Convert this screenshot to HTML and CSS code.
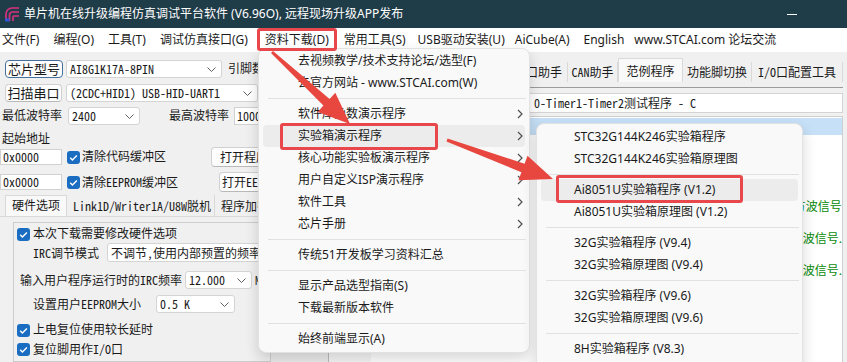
FILE: index.html
```html
<!DOCTYPE html>
<html lang="zh-CN">
<head>
  <meta charset="UTF-8">
  <meta name="viewport" content="width=device-width, initial-scale=1.0">
  <title>STC-ISP 单片机在线升级编程仿真调试平台软件</title>
  <link rel="stylesheet" href="styles.css">
</head>
<body>
  <div class="window">
    <header class="titlebar">
      <svg class="logo" viewBox="0 0 16 16">
        <path d="M2 15V8a6 6 0 0 1 6-6h7" />
        <path d="M5.5 15V9a3 3 0 0 1 3-3H15" />
        <path d="M9 15v-4a1 1 0 0 1 1-1h5" />
        <rect class="logo-foot" x="1" y="12.5" width="4.5" height="3" />
      </svg>
      <span class="title">单片机在线升级编程仿真调试平台软件 (V6.96O), 远程现场升级APP发布</span>
      <span class="win-min"></span>
    </header>

    <nav class="menubar">
      <span class="mi">文件(F)</span>
      <span class="mi">编程(O)</span>
      <span class="mi">工具(T)</span>
      <span class="mi">调试仿真接口(G)</span>
      <span class="mi open">资料下载(D)</span>
      <span class="mi">常用工具(S)</span>
      <span class="mi mi-usb">USB驱动安装(U)</span>
      <span class="mi mi-cube">AiCube(A)</span>
      <span class="mi mi-en">English</span>
      <span class="mi">www.STCAI.com 论坛交流</span>
    </nav>

    <div class="workspace">
      <!-- left: chip / port / options -->
      <section class="left">
        <div class="row r-chip">
          <span class="btn btn-focus">芯片型号</span>
          <span class="combo mono">AI8G1K17A-8PIN<svg class="chev" viewBox="0 0 9 5"><path d="M.5 .5 4.5 4.5 8.5 .5" /></svg></span>
          <span class="lbl">引脚数</span>
        </div>
        <div class="row r-port">
          <span class="btn">扫描串口</span>
          <span class="combo mono">(2CDC+HID1) USB-HID-UART1<svg class="chev" viewBox="0 0 9 5"><path d="M.5 .5 4.5 4.5 8.5 .5" /></svg></span>
        </div>
        <div class="row r-baud">
          <span class="lbl lbl-min">最低波特率</span>
          <span class="combo mono">2400<svg class="chev" viewBox="0 0 9 5"><path d="M.5 .5 4.5 4.5 8.5 .5" /></svg></span>
          <span class="lbl lbl-max">最高波特率</span>
          <span class="field mono">1000000</span>
        </div>
        <div class="addr-title">起始地址</div>
        <div class="row r-clr r-clr-code">
          <span class="field mono">0x0000</span>
          <span class="cb"><svg viewBox="0 0 13 13"><path d="M3.2 6.8l2.2 2.2 4.5-4.6" /></svg></span>
          <span class="cb-text">清除代码缓冲区</span>
          <span class="btn mono">打开程序文件</span>
        </div>
        <div class="row r-clr r-clr-ee">
          <span class="field mono">0x0000</span>
          <span class="cb"><svg viewBox="0 0 13 13"><path d="M3.2 6.8l2.2 2.2 4.5-4.6" /></svg></span>
          <span class="cb-text mono">清除EEPROM缓冲区</span>
          <span class="btn mono">打开EEPROM文件</span>
        </div>

        <div class="ltabs">
          <span class="ltab active">硬件选项</span>
          <span class="ltab mono wide">Link1D/Writer1A/U8W脱机</span>
          <span class="ltab mono">程序加密后传输</span>
        </div>
        <div class="tabpage">
          <div class="group">
            <div class="row g-row g-cb1">
              <span class="cb"><svg viewBox="0 0 13 13"><path d="M3.2 6.8l2.2 2.2 4.5-4.6" /></svg></span>
              <span class="cb-text">本次下载需要修改硬件选项</span>
            </div>
            <div class="row g-row g-irc">
              <span class="lbl mono">IRC调节模式</span>
              <span class="combo mono">不调节,使用内部预置的频率</span>
            </div>
            <div class="row g-row g-freq">
              <span class="lbl mono">输入用户程序运行时的IRC频率</span>
              <span class="combo mono">12.000<svg class="chev" viewBox="0 0 9 5"><path d="M.5 .5 4.5 4.5 8.5 .5" /></svg></span>
              <span class="unit mono">MHz</span>
            </div>
            <div class="row g-row g-ee">
              <span class="lbl mono">设置用户EEPROM大小</span>
              <span class="combo mono">0.5 K<svg class="chev" viewBox="0 0 9 5"><path d="M.5 .5 4.5 4.5 8.5 .5" /></svg></span>
            </div>
            <div class="row g-row g-cb2">
              <span class="cb"><svg viewBox="0 0 13 13"><path d="M3.2 6.8l2.2 2.2 4.5-4.6" /></svg></span>
              <span class="cb-text">上电复位使用较长延时</span>
            </div>
            <div class="row g-row g-cb3">
              <span class="cb"><svg viewBox="0 0 13 13"><path d="M3.2 6.8l2.2 2.2 4.5-4.6" /></svg></span>
              <span class="cb-text mono">复位脚用作I/O口</span>
            </div>
          </div>
        </div>
      </section>

      <!-- right: tool tabs + example code -->
      <section class="right">
        <div class="rtabs mono">
          <span class="rtab fill">USB-CDC/串口助手</span>
          <span class="rtab can">CAN助手</span>
          <span class="rtab active demo">范例程序</span>
          <span class="rtab pinsw">功能脚切换</span>
          <span class="rtab iocfg">I/O口配置工具</span>
        </div>
        <div class="rtab-rule"></div>
        <div class="path mono">
          <span class="path-head">STC8H系列 范例程序 - Timer</span>
          <span class="path-tail">0-Timer1-Timer2测试程序 - C</span>
        </div>
        <div class="code">
          <div class="gutter"></div>
          <div class="margin"></div>
          <div class="lines">
            <div class="ln current"></div>
            <div class="ln"></div>
            <div class="ln"></div>
            <div class="ln"></div>
            <div class="ln"></div>
            <div class="ln cm shift">//P1.0 输出 Timer0 方波信号.</div>
            <div class="ln"></div>
            <div class="ln cm">//P1.1 输出 Timer1 方波信号.</div>
            <div class="ln"></div>
            <div class="ln cm">//P1.2 输出 Timer2 方波信号.</div>
            <div class="ln"></div>
            <div class="ln"></div>
            <div class="ln"></div>
            <div class="ln"></div>
            <div class="ln inc"><span class="pp">#include</span> "reg51.h"</div>
          </div>
        </div>
      </section>
    </div>
  </div>

  <!-- 资料下载 dropdown -->
  <div class="menu menu-main">
    <div class="item">去视频教学/技术支持论坛/选型(F)</div>
    <div class="item">去官方网站 - www.STCAI.com(W)</div>
    <div class="sep"></div>
    <div class="item sub">软件库函数演示程序<svg class="more" viewBox="0 0 6 10"><path d="M1 1l4 4-4 4" /></svg></div>
    <div class="item sub hot">实验箱演示程序<svg class="more" viewBox="0 0 6 10"><path d="M1 1l4 4-4 4" /></svg></div>
    <div class="item sub">核心功能实验板演示程序<svg class="more" viewBox="0 0 6 10"><path d="M1 1l4 4-4 4" /></svg></div>
    <div class="item sub">用户自定义ISP演示程序<svg class="more" viewBox="0 0 6 10"><path d="M1 1l4 4-4 4" /></svg></div>
    <div class="item sub">软件工具<svg class="more" viewBox="0 0 6 10"><path d="M1 1l4 4-4 4" /></svg></div>
    <div class="item sub">芯片手册<svg class="more" viewBox="0 0 6 10"><path d="M1 1l4 4-4 4" /></svg></div>
    <div class="sep"></div>
    <div class="item">传统51开发板学习资料汇总</div>
    <div class="sep"></div>
    <div class="item">显示产品选型指南(S)</div>
    <div class="item">下载最新版本软件</div>
    <div class="sep"></div>
    <div class="item">始终前端显示(A)</div>
  </div>

  <!-- 实验箱演示程序 submenu -->
  <div class="menu menu-sub">
    <div class="item">STC32G144K246实验箱程序</div>
    <div class="item">STC32G144K246实验箱原理图</div>
    <div class="sep"></div>
    <div class="item hot">Ai8051U实验箱程序 (V1.2)</div>
    <div class="item">Ai8051U实验箱原理图 (V1.2)</div>
    <div class="sep"></div>
    <div class="item">32G实验箱程序 (V9.4)</div>
    <div class="item">32G实验箱原理图 (V9.4)</div>
    <div class="sep"></div>
    <div class="item">32G实验箱程序 (V9.6)</div>
    <div class="item">32G实验箱原理图 (V9.6)</div>
    <div class="sep"></div>
    <div class="item">8H实验箱程序 (V8.3)</div>
    <div class="item">8H实验箱原理图 (V8.3)</div>
  </div>

  <!-- red annotation marks -->
  <svg class="marks" viewBox="0 0 847 362">
    <rect x="258.5" y="29.5" width="77" height="20" rx="1.5" />
    <rect x="281.5" y="124.5" width="155" height="24" rx="1.5" />
    <rect x="557.5" y="176.5" width="184" height="25" rx="1.5" />
    <polygon points="273,50.9 329.6,99 335.3,92.7 350,124 317.7,111.9 323.4,105.6 271,53.1" />
    <polygon points="447.5,138.6 524.6,163.8 527.5,155.8 553,179 518.5,180.2 521.4,172.2 446.5,141.4" />
  </svg>
</body>
</html>
```

FILE: styles.css
```css
/* General Reset */
* {
  box-sizing: border-box;
}

body {
  margin: 0;
  width: 847px;
  height: 362px;
  overflow: hidden;
  position: relative;
  background: #f0f0f0;
  color: #1a1a1a;
  font-family: "Noto Sans", "Noto Sans CJK SC", sans-serif;
  font-size: 12px;
  line-height: 16px;
}

.mono {
  font-family: "Noto Sans Mono CJK SC", "Liberation Mono", "Noto Sans CJK SC", monospace;
}

/* Title bar */
.titlebar {
  height: 28px;
  background: #1f3c49;
  color: #fff;
  display: flex;
  align-items: center;
  padding-left: 4px;
}

.logo {
  width: 16px;
  height: 16px;
  margin-right: 4px;
}

.logo path {
  fill: none;
  stroke: #d8327c;
  stroke-width: 1.7;
}

.logo-foot {
  fill: #2d55d6;
}

.title {
  font-size: 12px;
}

.win-min {
  margin-left: auto;
  margin-right: 50px;
  width: 10px;
  height: 1px;
  background: #fff;
}

/* Menu bar */
.menubar {
  height: 24px;
  background: #fff;
  display: flex;
  align-items: center;
}

.mi {
  padding: 0 7px;
  height: 22px;
  line-height: 22px;
  white-space: nowrap;
}

.mi:first-child {
  padding-left: 2px;
}

.mi.open {
  padding: 0 8px 0 10px;
}

.mi-usb {
  padding: 0 5px;
}

.mi-cube {
  padding-left: 5px;
}

.mi-en {
  padding-right: 3px;
}

/* Workspace */
.workspace {
  display: flex;
  height: 310px;
}

.left {
  width: 270px;
  flex: none;
  padding-top: 8px;
  overflow: hidden;
}

.row {
  display: flex;
  align-items: center;
  white-space: nowrap;
}

.row > * {
  flex: none;
}

.btn {
  display: flex;
  align-items: center;
  justify-content: center;
  height: 18px;
  background: #fdfdfd;
  border: 1px solid #d0d0d0;
  border-bottom-color: #b9b9b9;
  border-radius: 4px;
  font-size: 13px;
  white-space: nowrap;
  overflow: hidden;
}

.btn-focus {
  border-color: #44709e;
}

.combo {
  display: flex;
  align-items: center;
  justify-content: space-between;
  height: 18px;
  padding: 0 5px 0 3px;
  background: #fff;
  border: 1px solid #d4d4d4;
  border-radius: 3px;
  white-space: nowrap;
  overflow: hidden;
}

.chev {
  width: 9px;
  height: 5px;
  flex: none;
}

.chev path {
  fill: none;
  stroke: #606060;
  stroke-width: 1;
}

.field {
  display: flex;
  align-items: center;
  height: 16px;
  padding-left: 2px;
  background: #fff;
  border: 1px solid #d2d2d2;
  white-space: nowrap;
  overflow: hidden;
}

.cb {
  width: 13px;
  height: 13px;
  border-radius: 3px;
  background: #1b6dc1;
  display: flex;
}

.cb svg {
  width: 13px;
  height: 13px;
}

.cb path {
  fill: none;
  stroke: #fff;
  stroke-width: 1.4;
}

.cb-text {
  margin-left: 2px;
}

.r-chip {
  height: 18px;
}

.r-chip .btn {
  margin-left: 5px;
  width: 58px;
}

.r-chip .combo {
  margin-left: 3px;
  width: 156px;
}

.r-chip .lbl {
  margin-left: 6px;
}

.r-port {
  margin-top: 6px;
  height: 18px;
}

.r-port .btn {
  margin-left: 5px;
  width: 57px;
}

.r-port .combo {
  margin-left: 4px;
  width: 192px;
}

.r-baud {
  margin-top: 5px;
  height: 18px;
}

.lbl-min {
  margin-left: 2px;
}

.r-baud .combo {
  margin-left: 6px;
  width: 72px;
}

.lbl-max {
  margin-left: 29px;
}

.r-baud .field {
  margin-left: 5px;
  width: 60px;
  height: 18px;
}

.addr-title {
  margin: 5px 0 0 2px;
  height: 17px;
  line-height: 17px;
}

.r-clr {
  height: 20px;
}

.r-clr .field {
  width: 62px;
}

.r-clr .cb {
  margin-left: 5px;
}

.r-clr-code .cb-text {
  width: 129px;
}

.r-clr-ee {
  margin-top: 5px;
}

.r-clr-ee .cb-text {
  width: 137px;
}

.r-clr .btn {
  width: 90px;
  height: 20px;
  font-size: 12px;
}

/* Left tabs */
.ltabs {
  display: flex;
  margin-top: 3px;
  height: 21px;
  padding-left: 5px;
}

.ltab {
  display: flex;
  align-items: center;
  flex: none;
  padding: 0 6px;
  border-right: 1px solid #d9d9d9;
  white-space: nowrap;
}

.ltab.active {
  width: 62px;
  background: #f9f9f9;
  border: 1px solid #d9d9d9;
  border-bottom: none;
}

.ltab.wide {
  width: 148px;
}

.tabpage {
  border-top: 1px solid #d9d9d9;
}

.group {
  margin: 5px 0 0 13px;
  width: 300px;
  height: 140px;
  border: 1px solid #cdcdcd;
}

.g-cb1 {
  margin-top: 4px;
  height: 14px;
}

.g-row .cb {
  margin-left: 3px;
}

.g-row .cb-text {
  margin-left: 3px;
}

.g-irc {
  margin-top: 2px;
  height: 19px;
}

.g-irc .lbl {
  margin-left: 19px;
  width: 74px;
}

.g-irc .combo {
  width: 180px;
  height: 19px;
}

.g-freq {
  margin-top: 9px;
  height: 18px;
}

.g-freq .lbl {
  margin-left: 6px;
  width: 165px;
}

.g-freq .combo {
  width: 67px;
}

.unit {
  margin-left: 3px;
}

.g-ee {
  margin-top: 6px;
  height: 18px;
}

.g-ee .lbl {
  margin-left: 19px;
  width: 123px;
}

.g-ee .combo {
  width: 79px;
}

.g-cb2 {
  margin-top: 10px;
  height: 14px;
}

.g-cb3 {
  margin-top: 5px;
  height: 14px;
}

/* Right panel */
.right {
  flex: 1;
  min-width: 0;
  margin-right: 4px;
  display: flex;
  flex-direction: column;
}

.rtabs {
  display: flex;
  align-items: flex-end;
  height: 24px;
  margin-top: 6px;
}

.rtab {
  display: flex;
  align-items: center;
  justify-content: center;
  height: 20px;
  flex: none;
  border-right: 1px solid #d9d9d9;
  white-space: nowrap;
}

.rtab.fill {
  flex: 1;
  justify-content: flex-end;
  padding-right: 5px;
  overflow: hidden;
}

.rtab.can {
  width: 50px;
}

.rtab.demo {
  width: 65px;
}

.rtab.pinsw {
  width: 69px;
}

.rtab.iocfg {
  width: 91px;
}

.rtab.active {
  height: 24px;
  background: #f9f9f9;
  border: 1px solid #d9d9d9;
  border-bottom: none;
}

.rtab-rule {
  margin-top: 5px;
  height: 1px;
  background: #9c9c9c;
}

.path {
  margin-top: 5px;
  height: 20px;
  display: flex;
  align-items: center;
  background: #fff;
  border: 1px solid #d4d4d4;
  white-space: nowrap;
  overflow: hidden;
}

.path-head {
  flex: 1;
  overflow: hidden;
  padding-left: 4px;
}

.path-tail {
  width: 308px;
  flex: none;
}

.code {
  margin-top: 3px;
  flex: 1;
  display: flex;
  background: #fff;
  border: 1px solid #cfcfcf;
  border-bottom: none;
  overflow: hidden;
}

.gutter {
  width: 58px;
  flex: none;
  background: #ececec;
  border-right: 1px solid #bdbdbd;
}

.margin {
  width: 42px;
  flex: none;
  background: #f6f6f6;
}

.lines {
  flex: 1;
  min-width: 0;
  padding-top: 1px;
  font-size: 11px;
}

.ln {
  height: 16px;
  line-height: 16px;
  padding-left: 8px;
  white-space: nowrap;
  overflow: hidden;
}

.ln.current {
  height: 17px;
  background: #c6e0f7;
}

.ln.cm {
  text-align: right;
  color: #0a8a0a;
  font-size: 12px;
}

.ln.shift {
  margin-right: -3px;
}

.ln.inc {
  margin-top: -8px;
  font-size: 12px;
}

.pp {
  color: #9b3fb0;
}

/* Dropdown menus */
.menu {
  position: absolute;
  background: #f9f9f9;
  border: 1px solid #e2e2e2;
  border-radius: 8px;
  box-shadow: 0 6px 14px rgba(0, 0, 0, 0.16);
  padding: 1px 0 2px;
}

.menu-main {
  top: 48px;
  left: 258px;
  width: 272px;
}

.menu-sub {
  top: 123px;
  left: 536px;
  width: 267px;
  padding-top: 2px;
}

.item {
  height: 22px;
  margin: 0 4px;
  padding-left: 35px;
  border-radius: 4px;
  display: flex;
  align-items: center;
  white-space: nowrap;
}

.menu-sub .item {
  padding-left: 33px;
}

.item.hot {
  background: #ececec;
}

.more {
  width: 6px;
  height: 10px;
  margin-left: auto;
  margin-right: 2px;
}

.more path {
  fill: none;
  stroke: #505050;
  stroke-width: 1.2;
}

.sep {
  height: 1px;
  margin: 4px 3px 4px 9px;
  background: #e1e1e1;
}

/* Annotation overlay */
.marks {
  position: absolute;
  top: 0;
  left: 0;
  width: 847px;
  height: 362px;
  pointer-events: none;
}

.marks rect {
  fill: none;
  stroke: #e8474b;
  stroke-width: 3;
}

.marks polygon {
  fill: #e8473f;
}
```
